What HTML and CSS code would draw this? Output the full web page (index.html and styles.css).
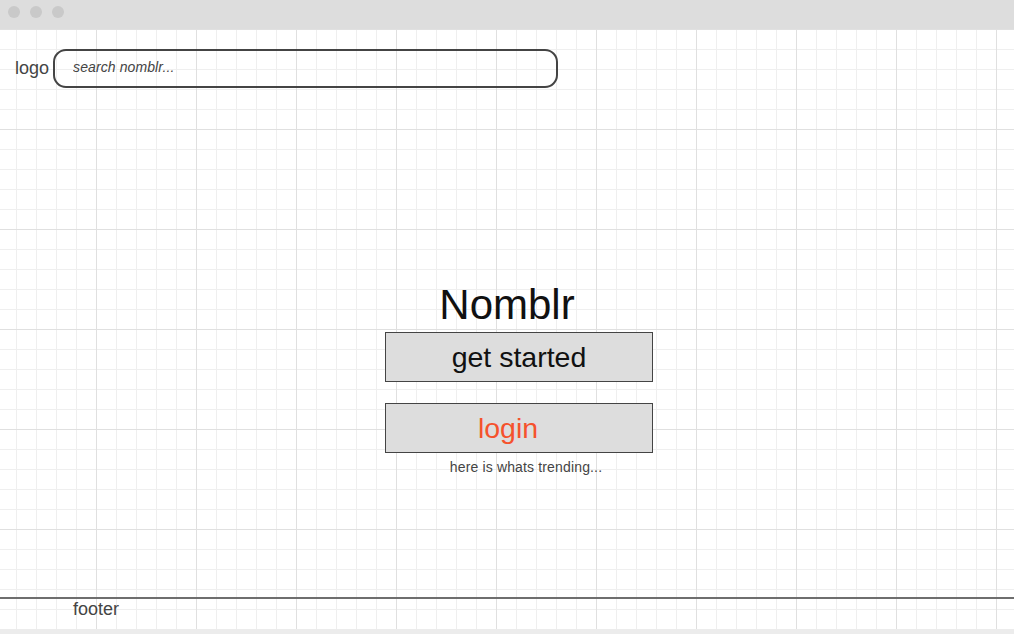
FILE: index.html
```html
<!DOCTYPE html>
<html>
<head>
<meta charset="utf-8">
<title>Nomblr</title>
<link rel="stylesheet" href="styles.css">
</head>
<body>
<div class="window">
  <div class="titlebar">
    <span class="dot"></span><span class="dot"></span><span class="dot"></span>
  </div>
  <div class="canvas">
    <header class="header">
      <span class="logo">logo</span>
      <input class="search" type="text" placeholder="search nomblr...">
    </header>
    <main class="main">
      <h1 class="title">Nomblr</h1>
      <button class="btn btn-start">get started</button>
      <button class="btn btn-login">login</button>
      <p class="trending">here is whats trending...</p>
    </main>
    <footer class="footer">footer</footer>
  </div>
  <div class="bottombar"></div>
</div>
</body>
</html>
```

FILE: styles.css
```css
* { box-sizing: border-box; }
html, body { margin: 0; padding: 0; }
body {
  width: 1014px;
  height: 634px;
  overflow: hidden;
  font-family: "Liberation Sans", Arial, sans-serif;
  color: #444;
  background: #fff;
}
.window {
  display: flex;
  flex-direction: column;
  height: 634px;
}
.titlebar {
  height: 29px;
  background: #dddddd;
  display: flex;
  align-items: center;
  gap: 10px;
  padding: 0 0 5px 8px;
}
.dot {
  width: 12px;
  height: 12px;
  border-radius: 50%;
  background: #c9c9c9;
}
.canvas {
  height: 600px;
  display: flex;
  flex-direction: column;
  background-color: #fff;
  background-image:
    linear-gradient(to right, #e0e0e0 1px, transparent 1px),
    linear-gradient(to bottom, #e0e0e0 1px, transparent 1px),
    linear-gradient(to right, #efefef 1px, transparent 1px),
    linear-gradient(to bottom, #efefef 1px, transparent 1px);
  background-size: 100px 100px, 100px 100px, 20px 20px, 20px 20px;
  background-position: -4px 0, -4px 0, -4px 0, -4px 0;
}
.header {
  display: flex;
  align-items: center;
  gap: 4px;
  padding: 20px 0 0 15px;
}
.logo {
  font-size: 18px;
  line-height: 21px;
  color: #444;
}
.search {
  width: 505px;
  height: 39px;
  border: 2px solid #444;
  border-radius: 13px;
  background: transparent;
  padding: 0 18px 4px;
  margin: 0;
  font-family: "Liberation Sans", Arial, sans-serif;
  font-style: italic;
  font-size: 14px;
  letter-spacing: 0.1px;
  color: #444;
  outline: none;
}
.search::placeholder {
  color: #444;
  opacity: 1;
}
.main {
  flex: 1;
  display: flex;
  flex-direction: column;
  align-items: center;
  padding-top: 193px;
}
.title {
  margin: 0 0 3px;
  font-size: 42px;
  line-height: 48px;
  font-weight: normal;
  color: #111;
}
.btn {
  width: 268px;
  height: 50px;
  margin: 0 0 0 24px;
  padding: 0;
  background: #dddddd;
  border: 1px solid #444;
  font-family: "Liberation Sans", Arial, sans-serif;
  font-size: 28.5px;
  line-height: 32px;
  color: #111;
}
.btn-login {
  margin-top: 21px;
  padding-right: 22px;
  color: #f5522d;
}
.trending {
  margin: 6px 0 0 38px;
  font-size: 14px;
  line-height: 16px;
  letter-spacing: 0.15px;
  color: #444;
}
.footer {
  border-top: 2px solid #6e6e6e;
  padding: 0 0 9px 73px;
  font-size: 18px;
  line-height: 21px;
  color: #444;
}
.bottombar {
  height: 5px;
  background: #ececec;
}
```
